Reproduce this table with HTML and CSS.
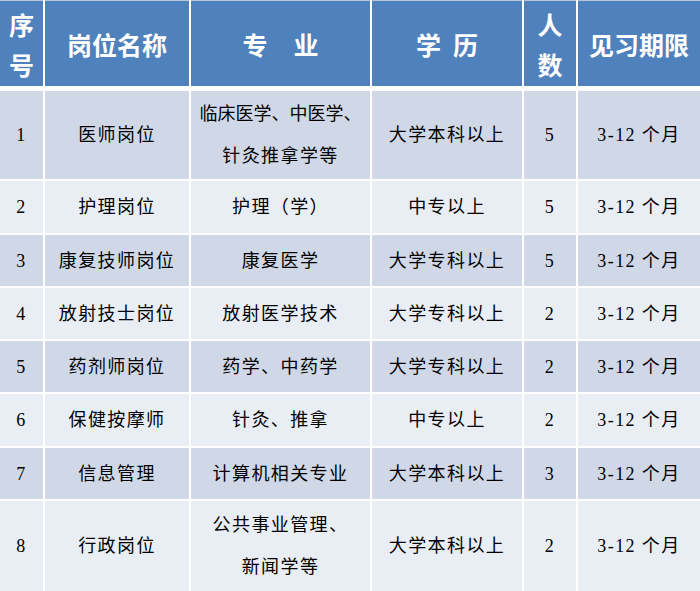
FILE: index.html
```html
<!DOCTYPE html>
<html lang="zh-CN">
<head>
<meta charset="utf-8">
<title>见习岗位</title>
<link rel="stylesheet" href="styles.css">
</head>
<body>
<div class="sheet">
  <div class="cell head"><span class="txt">序<br>号</span></div>
  <div class="cell head"><span class="txt">岗位名称</span></div>
  <div class="cell head"><span class="txt">专<span class="gap-wide"></span>业</span></div>
  <div class="cell head"><span class="txt">学<span class="gap-half"></span>历</span></div>
  <div class="cell head"><span class="txt">人<br>数</span></div>
  <div class="cell head"><span class="txt">见习期限</span></div>

  <div class="cell dark">1</div>
  <div class="cell dark">医师岗位</div>
  <div class="cell dark"><span class="txt"><span class="tight">临床医学、中医学、</span><br>针灸推拿学等</span></div>
  <div class="cell dark">大学本科以上</div>
  <div class="cell dark">5</div>
  <div class="cell dark">3-12 个月</div>

  <div class="cell light">2</div>
  <div class="cell light">护理岗位</div>
  <div class="cell light">护理（学）</div>
  <div class="cell light">中专以上</div>
  <div class="cell light">5</div>
  <div class="cell light">3-12 个月</div>

  <div class="cell dark">3</div>
  <div class="cell dark">康复技师岗位</div>
  <div class="cell dark">康复医学</div>
  <div class="cell dark">大学专科以上</div>
  <div class="cell dark">5</div>
  <div class="cell dark">3-12 个月</div>

  <div class="cell light">4</div>
  <div class="cell light">放射技士岗位</div>
  <div class="cell light">放射医学技术</div>
  <div class="cell light">大学专科以上</div>
  <div class="cell light">2</div>
  <div class="cell light">3-12 个月</div>

  <div class="cell dark">5</div>
  <div class="cell dark">药剂师岗位</div>
  <div class="cell dark">药学、中药学</div>
  <div class="cell dark">大学专科以上</div>
  <div class="cell dark">2</div>
  <div class="cell dark">3-12 个月</div>

  <div class="cell light">6</div>
  <div class="cell light">保健按摩师</div>
  <div class="cell light">针灸、推拿</div>
  <div class="cell light">中专以上</div>
  <div class="cell light">2</div>
  <div class="cell light">3-12 个月</div>

  <div class="cell dark">7</div>
  <div class="cell dark">信息管理</div>
  <div class="cell dark">计算机相关专业</div>
  <div class="cell dark">大学本科以上</div>
  <div class="cell dark">3</div>
  <div class="cell dark">3-12 个月</div>

  <div class="cell light">8</div>
  <div class="cell light">行政岗位</div>
  <div class="cell light"><span class="txt">公共事业管理、<br>新闻学等</span></div>
  <div class="cell light">大学本科以上</div>
  <div class="cell light">2</div>
  <div class="cell light">3-12 个月</div>
</div>
</body>
</html>
```
FILE: styles.css
```css
html, body {
  margin: 0;
  padding: 0;
  background: #ffffff;
}

.sheet {
  width: 700px;
  height: 591px;
  overflow: hidden;
  display: grid;
  grid-template-columns: 43px 144px 179px 150px 52px 122px;
  grid-template-rows: 89px 88px 52px 51px 51px 51px 52px 51px 90px;
  column-gap: 2px;
  row-gap: 2px;
  background: #ffffff;
}

.cell {
  display: flex;
  align-items: center;
  justify-content: center;
  text-align: center;
  box-sizing: border-box;
  font-family: "Liberation Serif", "Noto Sans CJK SC", serif;
  font-size: 18px;
  letter-spacing: 1.4px;
  line-height: 42px;
  color: #000000;
  white-space: nowrap;
}

.txt {
  display: block;
}

.head {
  margin-bottom: 3px;
  background: #4f81bd;
  border-top: 1px solid #b7c5dc;
  color: #ffffff;
  font-family: "Noto Sans CJK SC", sans-serif;
  font-weight: 700;
  font-size: 25px;
  letter-spacing: 0;
  line-height: 40px;
}

.dark {
  background: #d0d8e8;
}

.light {
  background: #e9edf4;
}

.tight {
  letter-spacing: 0;
}

.gap-wide {
  display: inline-block;
  width: 26px;
}

.gap-half {
  display: inline-block;
  width: 12px;
}
```
